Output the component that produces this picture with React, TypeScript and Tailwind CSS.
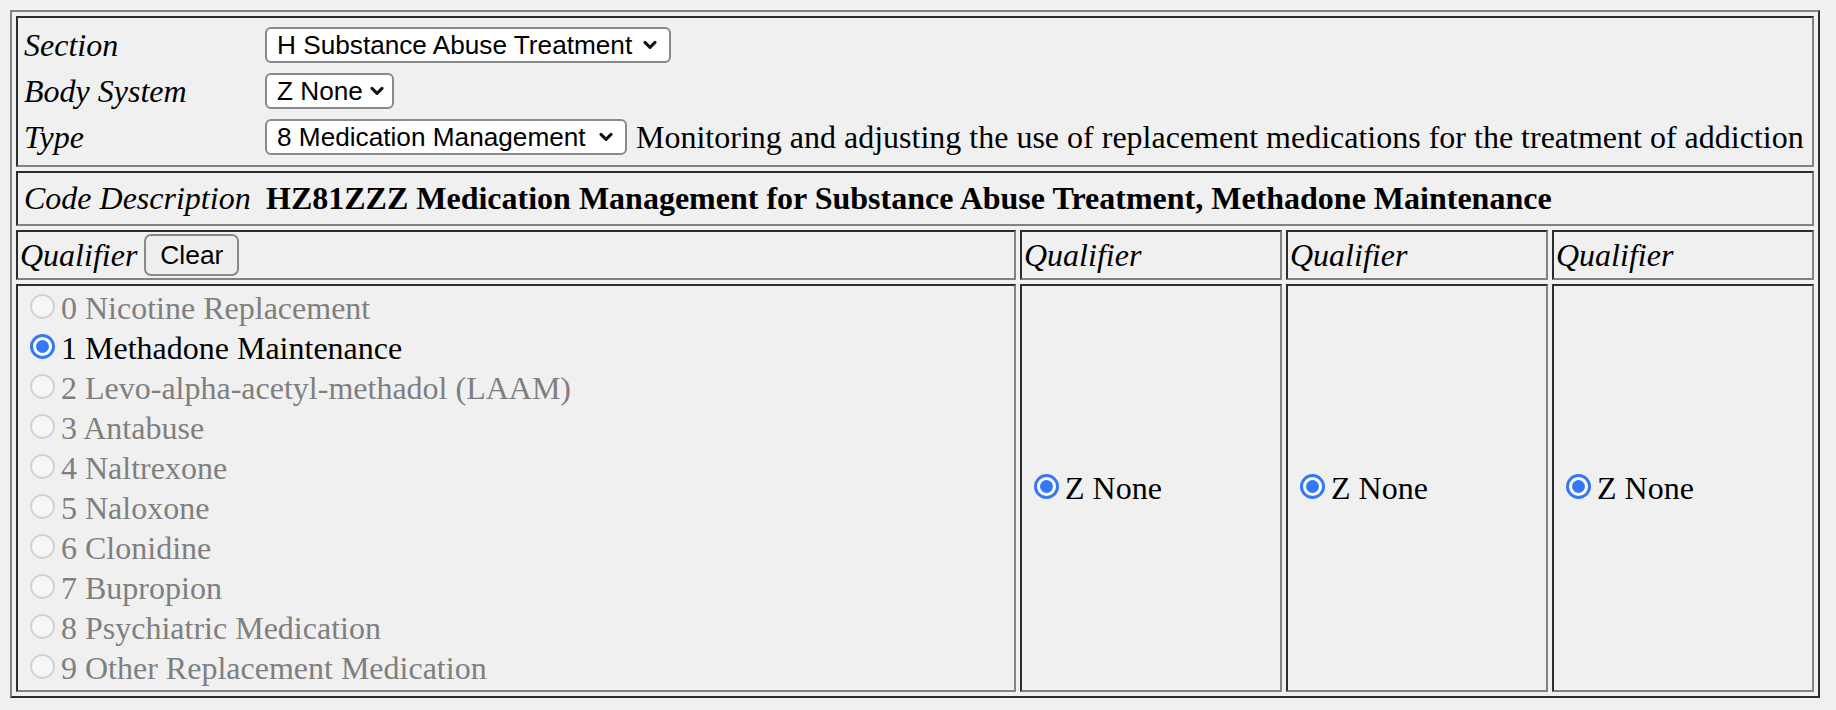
import React from "react";

const cell =
  "border-2 border-t-[#2d2d2d] border-l-[#2d2d2d] border-r-[#828282] border-b-[#828282]";

function Chevron() {
  return (
    <svg width="14" height="10" viewBox="0 0 14 10" className="shrink-0">
      <path
        d="M2 2.4 L7 7.4 L12 2.4"
        fill="none"
        stroke="#111"
        strokeWidth="3"
        strokeLinecap="round"
        strokeLinejoin="round"
      />
    </svg>
  );
}

function FakeSelect({ label, w, pr }: { label: string; w: string; pr: string }) {
  return (
    <div
      role="combobox"
      className={`${w} ${pr} h-[36px] border-2 border-[#8a8a8a] rounded-[6px] bg-white flex items-center justify-between pl-[10px] font-['Liberation_Sans',Arial,sans-serif] text-[26.2px] leading-none not-italic text-black shrink-0`}
    >
      <span className="whitespace-nowrap">{label}</span>
      <Chevron />
    </div>
  );
}

function Radio({ checked }: { checked?: boolean }) {
  if (checked) {
    return (
      <span
        role="radio"
        aria-checked="true"
        className="mt-[6px] w-[25px] h-[25px] rounded-full border-[3px] border-[#3478f6] bg-white flex items-center justify-center shrink-0"
      >
        <span className="w-[13px] h-[13px] rounded-full bg-[#3478f6]" />
      </span>
    );
  }
  return (
    <span
      role="radio"
      aria-checked="false"
      className="mt-[6px] w-[25px] h-[25px] rounded-full border-2 border-[#d2d2d2] bg-[#f6f6f6] shrink-0"
    />
  );
}

const items = [
  "0 Nicotine Replacement",
  "1 Methadone Maintenance",
  "2 Levo-alpha-acetyl-methadol (LAAM)",
  "3 Antabuse",
  "4 Naltrexone",
  "5 Naloxone",
  "6 Clonidine",
  "7 Bupropion",
  "8 Psychiatric Medication",
  "9 Other Replacement Medication",
];

function ZNone() {
  return (
    <div className={`${cell} h-[408px] flex items-center pl-[12px]`}>
      <div className="flex items-start h-[40px]">
        <Radio checked />
        <span className="ml-[6px] leading-[40px] whitespace-nowrap">Z None</span>
      </div>
    </div>
  );
}

export default function App() {
  return (
    <div className="min-h-screen bg-[#f0f0f0] pt-[10px] pl-[10px] font-['Liberation_Serif','Times_New_Roman',serif] text-[32px] text-black">
      <div className="w-[1810px] border-2 border-t-[#828282] border-l-[#828282] border-r-[#2d2d2d] border-b-[#2d2d2d] p-[4px] flex flex-col gap-[4px]">
        {/* Row A */}
        <div className={`${cell} h-[151px] pt-[4px] pl-[6px] flex flex-col`}>
          <div className="h-[46px] flex items-center">
            <span className="w-[241px] italic leading-[37px] shrink-0">Section</span>
            <FakeSelect label="H Substance Abuse Treatment" w="w-[406px]" pr="pr-[12px]" />
          </div>
          <div className="h-[46px] flex items-center">
            <span className="w-[241px] italic leading-[37px] shrink-0">Body System</span>
            <FakeSelect label="Z None" w="w-[129px]" pr="pr-[8px]" />
          </div>
          <div className="h-[46px] flex items-center">
            <span className="w-[241px] italic leading-[37px] shrink-0">Type</span>
            <FakeSelect label="8 Medication Management" w="w-[362px]" pr="pr-[12px]" />
            <span className="ml-[9px] leading-[37px] whitespace-nowrap">
              Monitoring and adjusting the use of replacement medications for the treatment of addiction
            </span>
          </div>
        </div>

        {/* Row B */}
        <div className={`${cell} h-[55px] pl-[6px] flex items-center`}>
          <span className="w-[242px] italic leading-[37px] shrink-0">Code Description</span>
          <span className="font-bold leading-[37px] whitespace-nowrap">
            HZ81ZZZ Medication Management for Substance Abuse Treatment, Methadone Maintenance
          </span>
        </div>

        {/* Rows C & D */}
        <div className="grid grid-cols-[1000px_262px_262px_262px] grid-rows-[50px_408px] gap-[4px]">
          <div className={`${cell} h-[50px] pl-[2px] flex items-center`}>
            <span className="italic leading-[37px]">Qualifier</span>
            <button
              type="button"
              className="ml-[7px] h-[42px] w-[95px] border-2 border-[#8a8a8a] rounded-[7px] bg-[#efefef] font-['Liberation_Sans',Arial,sans-serif] text-[26.4px] leading-none text-black"
            >
              Clear
            </button>
          </div>
          <div className={`${cell} h-[50px] pl-[2px] flex items-center`}>
            <span className="italic leading-[37px]">Qualifier</span>
          </div>
          <div className={`${cell} h-[50px] pl-[2px] flex items-center`}>
            <span className="italic leading-[37px]">Qualifier</span>
          </div>
          <div className={`${cell} h-[50px] pl-[2px] flex items-center`}>
            <span className="italic leading-[37px]">Qualifier</span>
          </div>

          <div className={`${cell} h-[408px] pt-[2px] pl-[12px] flex flex-col`}>
            {items.map((t, i) => (
              <div key={t} className="flex items-start h-[40px]">
                <Radio checked={i === 1} />
                <span
                  className={`ml-[6px] leading-[40px] whitespace-nowrap ${
                    i === 1 ? "text-black" : "text-[#7f7f7f]"
                  }`}
                >
                  {t}
                </span>
              </div>
            ))}
          </div>
          <ZNone />
          <ZNone />
          <ZNone />
        </div>
      </div>
    </div>
  );
}
